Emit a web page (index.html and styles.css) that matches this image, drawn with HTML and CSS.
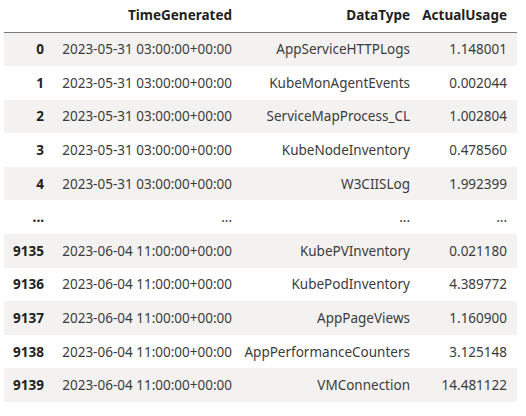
FILE: index.html
```html
<!DOCTYPE html>
<html>
<head>
<meta charset="utf-8">
<link rel="stylesheet" href="styles.css">
</head>
<body>
<table class="df">
  <colgroup>
    <col class="c-idx"><col class="c-time"><col class="c-type"><col class="c-usage">
  </colgroup>
  <thead>
    <tr><th></th><th>TimeGenerated</th><th>DataType</th><th>ActualUsage</th></tr>
  </thead>
  <tbody>
    <tr><th>0</th><td>2023-05-31 03:00:00+00:00</td><td>AppServiceHTTPLogs</td><td>1.148001</td></tr>
    <tr><th>1</th><td>2023-05-31 03:00:00+00:00</td><td>KubeMonAgentEvents</td><td>0.002044</td></tr>
    <tr><th>2</th><td>2023-05-31 03:00:00+00:00</td><td>ServiceMapProcess_CL</td><td>1.002804</td></tr>
    <tr><th>3</th><td>2023-05-31 03:00:00+00:00</td><td>KubeNodeInventory</td><td>0.478560</td></tr>
    <tr><th>4</th><td>2023-05-31 03:00:00+00:00</td><td>W3CIISLog</td><td>1.992399</td></tr>
    <tr><th>...</th><td>...</td><td>...</td><td>...</td></tr>
    <tr><th>9135</th><td>2023-06-04 11:00:00+00:00</td><td>KubePVInventory</td><td>0.021180</td></tr>
    <tr><th>9136</th><td>2023-06-04 11:00:00+00:00</td><td>KubePodInventory</td><td>4.389772</td></tr>
    <tr><th>9137</th><td>2023-06-04 11:00:00+00:00</td><td>AppPageViews</td><td>1.160900</td></tr>
    <tr><th>9138</th><td>2023-06-04 11:00:00+00:00</td><td>AppPerformanceCounters</td><td>3.125148</td></tr>
    <tr><th>9139</th><td>2023-06-04 11:00:00+00:00</td><td>VMConnection</td><td>14.481122</td></tr>
  </tbody>
</table>
</body>
</html>
```
FILE: styles.css
```css
html, body {
  margin: 0;
  padding: 0;
  background: #ffffff;
}
body {
  padding: 0 0 0 4px;
  font-family: "Noto Sans", "Open Sans", sans-serif;
  font-size: 13.5px;
  color: #3b3b3b;
}
.df {
  border-collapse: collapse;
  table-layout: fixed;
  width: 513px;
}
.c-idx { width: 50px; }
.c-time { width: 188px; }
.c-type { width: 178px; }
.c-usage { width: 97px; }
.df th, .df td {
  text-align: right;
  padding: 0 10px 0 0;
  line-height: 20px;
  height: 33.6px;
  box-sizing: border-box;
  white-space: nowrap;
  overflow: visible;
}
.df th {
  font-weight: 700;
  color: #1f1f1f;
}
.df thead th {
  height: 32.4px;
  border-bottom: 1px solid #7a7a7a;
  padding-bottom: 1px;
}
.df tbody tr:nth-child(odd) {
  background: #f3f2f1;
}
```
